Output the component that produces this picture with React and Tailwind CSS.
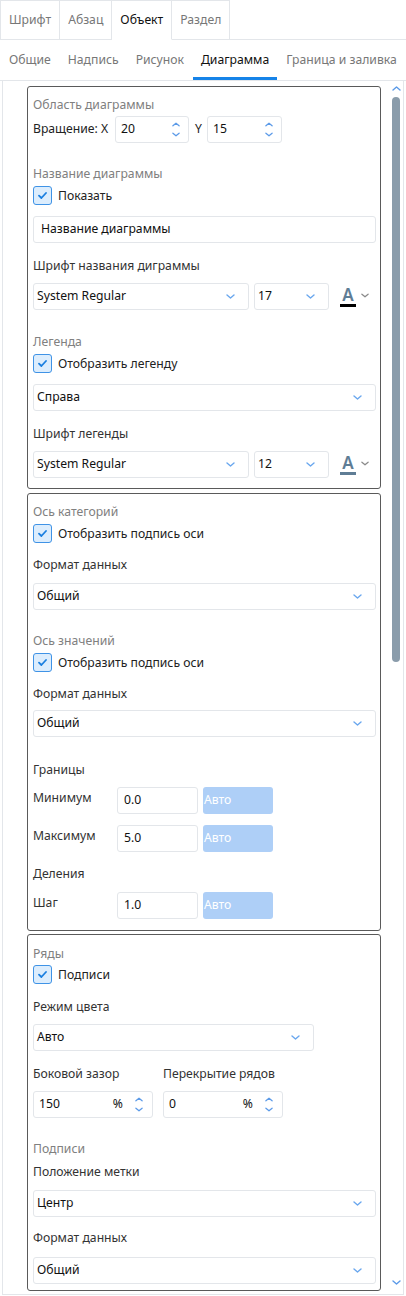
import React from "react";

const FONT = "font-['Noto_Sans','Segoe_UI',sans-serif]";

function Chevron({ dir = "down", color = "#6aa7ee", w = 9, h = 5 }) {
  const d = dir === "down" ? "M1 1 L4.5 4 L8 1" : "M1 4 L4.5 1 L8 4";
  return (
    <svg width={w} height={h} viewBox="0 0 9 5" className="shrink-0">
      <path d={d} stroke={color} strokeWidth="1.4" fill="none" strokeLinecap="round" strokeLinejoin="round" />
    </svg>
  );
}

function Spinner() {
  return (
    <div className="flex flex-col items-center gap-[5px]">
      <Chevron dir="up" w={8} h={5} color="#5b9ae8" />
      <Chevron dir="down" w={8} h={5} color="#5b9ae8" />
    </div>
  );
}

const Heading = ({ children, className = "" }) => (
  <div className={"h-[18px] leading-[21px] text-[12.2px] text-[#808080] whitespace-nowrap " + className}>{children}</div>
);
const Label = ({ children, className = "" }) => (
  <div className={"h-[18px] leading-[21px] text-[12.2px] text-[#333] whitespace-nowrap " + className}>{children}</div>
);

function Check({ label, className = "" }) {
  return (
    <div className={"flex items-center h-[19px] " + className}>
      <div className="w-[19px] h-[19px] rounded-[3px] border border-[#3f93e6] bg-[#dcedfd] flex items-center justify-center">
        <svg width="9" height="7" viewBox="0 0 9 7">
          <path d="M1 3.6 L3.4 6 L8 1" stroke="#1a7fe0" strokeWidth="1.8" fill="none" strokeLinecap="round" strokeLinejoin="round" />
        </svg>
      </div>
      <span className="ml-[6px] text-[12.2px] text-[#222] leading-[18px] whitespace-nowrap">{label}</span>
    </div>
  );
}

function Select({ value, className = "", chevronPad = "pr-[13px]" }) {
  return (
    <div className={"h-[27px] border border-[#e3e6ea] rounded-[3px] flex items-center justify-between pl-[3px] " + chevronPad + " " + className}>
      <span className="text-[12.2px] text-[#111] whitespace-nowrap">{value}</span>
      <Chevron />
    </div>
  );
}

function Field({ value, className = "", pl = "pl-[6px]", children }) {
  return (
    <div className={"h-[27px] border border-[#e3e6ea] rounded-[3px] flex items-center " + pl + " " + className}>
      <span className="text-[12.2px] text-[#111] flex-1 whitespace-nowrap">{value}</span>
      {children}
    </div>
  );
}

function ColorA({ bar }) {
  return (
    <div className="flex items-center ml-[11px]">
      <div className="flex flex-col items-center w-[16px]">
        <span className="text-[17px] leading-[18px] font-semibold text-[#5f7d95]">A</span>
        <div className={"w-[16px] h-[3px] " + bar}></div>
      </div>
      <div className="ml-[5px] mt-[-2px]">
        <Chevron color="#8a8a8a" w={8} h={5} />
      </div>
    </div>
  );
}

function AutoRow({ label, value, className = "" }) {
  return (
    <div className={"flex items-start " + className}>
      <Label className="w-[84px]">{label}</Label>
      <Field value={value} className="w-[81px]" pl="pl-[6px]" />
      <div className="ml-[5px] w-[70px] h-[27px] rounded-[3px] bg-[#aecff7] flex items-center">
        <span className="text-[12.2px] text-white pl-[1px]">Авто</span>
      </div>
    </div>
  );
}

export default function App() {
  const tabs1 = ["Шрифт", "Абзац", "Объект", "Раздел"];
  const tabs2 = ["Общие", "Надпись", "Рисунок", "Диаграмма", "Граница и заливка"];
  return (
    <div className={"w-[406px] h-[1296px] bg-white overflow-hidden " + FONT}>
      {/* top tabs */}
      <div className="flex h-[40px]">
        {tabs1.map((t, i) => (
          <div
            key={t}
            className={
              "h-[40px] flex items-center px-[8px] border-t border-r border-[#e3e6ea] text-[12.2px] whitespace-nowrap " +
              (i === 0 ? "border-l " : "") +
              (t === "Объект" ? "text-[#111] border-b border-b-white" : "text-[#777] border-b")
            }
          >
            {t}
          </div>
        ))}
        <div className="flex-1 border-b border-[#e3e6ea]"></div>
      </div>
      {/* second tabs */}
      <div className="flex h-[41px] border-b border-[#e3e6ea] pl-[1px] gap-[1px]">
        {tabs2.map((t) => (
          <div key={t} className={"relative h-[40px] flex items-center px-[8px] text-[12.2px] whitespace-nowrap " + (t === "Диаграмма" ? "text-[#111]" : "text-[#777]")}>
            {t}
            {t === "Диаграмма" && <div className="absolute left-0 right-0 bottom-0 h-[3px] bg-[#1683e8]"></div>}
          </div>
        ))}
      </div>
      {/* content */}
      <div className="mx-[2px] h-[1214px] border-x border-b border-[#e3e6ea] flex">
        <div className="w-[388px] pl-[24px] pt-[5px]">
          {/* panel 1 */}
          <div className="w-[354px] h-[403px] border border-[#5a5a5a] rounded-[3px] pl-[5px] pr-[4px] pt-[7px]">
            <Heading>Область диаграммы</Heading>
            <div className="mt-[4px] flex items-center h-[27px]">
              <span className="text-[12.2px] text-[#222] whitespace-nowrap">Вращение: X</span>
              <Field value="20" className="ml-[7px] w-[74px] pr-[8px]" pl="pl-[5px]"><Spinner /></Field>
              <span className="ml-[6px] text-[12.2px] text-[#222]">Y</span>
              <Field value="15" className="ml-[5px] w-[75px] pr-[8px]" pl="pl-[5px]"><Spinner /></Field>
            </div>
            <Heading className="mt-[20px]">Название диаграммы</Heading>
            <Check label="Показать" className="mt-[5px]" />
            <Field value="Название диаграммы" className="mt-[11px] w-[343px]" pl="pl-[7px]" />
            <Label className="mt-[12px]">Шрифт названия диграммы</Label>
            <div className="mt-[10px] flex items-center">
              <Select value="System Regular" className="w-[216px]" />
              <Select value="17" className="ml-[5px] w-[75px]" />
              <ColorA bar="bg-black" />
            </div>
            <Heading className="mt-[21px]">Легенда</Heading>
            <Check label="Отобразить легенду" className="mt-[5px]" />
            <Select value="Справа" className="mt-[11px] w-[343px]" />
            <Label className="mt-[12px]">Шрифт легенды</Label>
            <div className="mt-[10px] flex items-center">
              <Select value="System Regular" className="w-[216px]" />
              <Select value="12" className="ml-[5px] w-[75px]" />
              <ColorA bar="bg-[#5f7d95]" />
            </div>
          </div>
          {/* panel 2 */}
          <div className="mt-[4px] w-[354px] h-[438px] border border-[#5a5a5a] rounded-[3px] pl-[5px] pr-[4px] pt-[7px]">
            <Heading>Ось категорий</Heading>
            <Check label="Отобразить подпись оси" className="mt-[5px]" />
            <Label className="mt-[11px]">Формат данных</Label>
            <Select value="Общий" className="mt-[11px] w-[343px]" />
            <Heading className="mt-[20px]">Ось значений</Heading>
            <Check label="Отобразить подпись оси" className="mt-[5px]" />
            <Label className="mt-[11px]">Формат данных</Label>
            <Select value="Общий" className="mt-[9px] w-[343px]" />
            <Label className="mt-[22px]">Границы</Label>
            <AutoRow label="Минимум" value="0.0" className="mt-[10px]" />
            <AutoRow label="Максимум" value="5.0" className="mt-[11px]" />
            <Label className="mt-[11px]">Деления</Label>
            <AutoRow label="Шаг" value="1.0" className="mt-[11px]" />
          </div>
          {/* panel 3 */}
          <div className="mt-[3px] w-[354px] h-[357px] border border-[#5a5a5a] rounded-[3px] pl-[5px] pr-[4px] pt-[8px]">
            <Heading>Ряды</Heading>
            <Check label="Подписи" className="mt-[4px]" />
            <Label className="mt-[12px]">Режим цвета</Label>
            <Select value="Авто" className="mt-[10px] w-[281px]" />
            <div className="mt-[12px] flex">
              <Label className="w-[130px]">Боковой зазор</Label>
              <Label>Перекрытие рядов</Label>
            </div>
            <div className="mt-[10px] flex">
              <Field value="150" className="w-[120px] pr-[9px]" pl="pl-[5px]">
                <span className="text-[12.2px] text-[#111] mr-[12px]">%</span>
                <Spinner />
              </Field>
              <Field value="0" className="ml-[10px] w-[120px] pr-[9px]" pl="pl-[5px]">
                <span className="text-[12.2px] text-[#111] mr-[12px]">%</span>
                <Spinner />
              </Field>
            </div>
            <Heading className="mt-[20px]">Подписи</Heading>
            <Label className="mt-[5px]">Положение метки</Label>
            <Select value="Центр" className="mt-[11px] w-[343px]" />
            <Label className="mt-[10px]">Формат данных</Label>
            <Select value="Общий" className="mt-[12px] w-[343px]" />
          </div>
        </div>
        {/* scrollbar */}
        <div className="flex-1 flex flex-col items-center pt-[5px] pb-[9px] pr-[2px]">
          <Chevron dir="up" w={9} h={5} color="#5b9ae8" />
          <div className="mt-[6px] w-[8px] h-[565px] rounded-[4px] bg-[#8a9cab]"></div>
          <div className="flex-1"></div>
          <Chevron dir="down" w={9} h={5} color="#5b9ae8" />
        </div>
      </div>
    </div>
  );
}
